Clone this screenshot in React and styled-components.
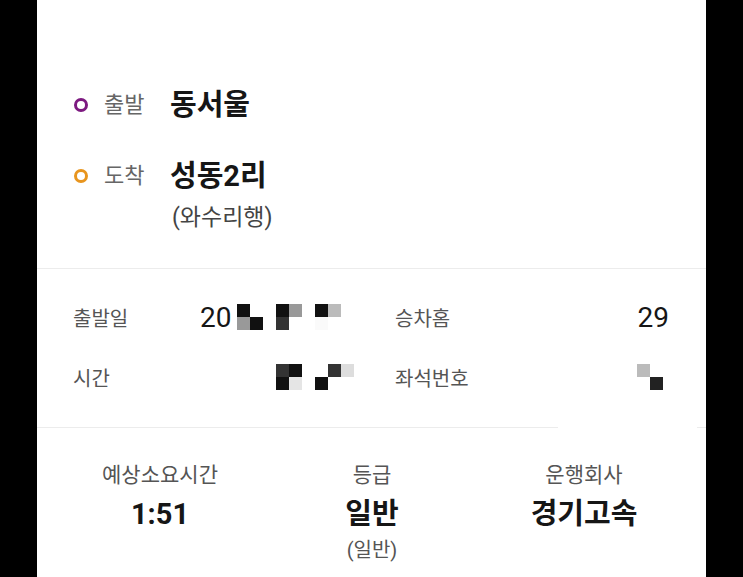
import styled, { createGlobalStyle } from "styled-components";

const GlobalStyle = createGlobalStyle`
  html, body {
    margin: 0;
    padding: 0;
    background: #000;
  }
  body {
    font-family: "Roboto", "Noto Sans CJK KR", "Noto Sans", sans-serif;
  }
`

const Screen = styled.main`
  width: 669px;
  height: 577px;
  margin: 0 auto;
  background: #fff;
  overflow: hidden;
`

const RouteSection = styled.section`
  padding: 85px 0 34px 37px;
  display: flex;
  flex-direction: column;
  gap: 31px;
  border-bottom: 1px solid #ececec;
`

const RouteRow = styled.div`
  display: grid;
  grid-template-columns: 14px 50px 1fr;
  column-gap: 16px;
  align-items: center;
`

const Dot = styled.span`
  width: 14px;
  height: 14px;
  box-sizing: border-box;
  border-radius: 50%;
  border: 3.5px solid ${(p) => p.color};
`

const RouteLabel = styled.span`
  font-size: 22px;
  line-height: 40px;
  color: #666;
`

const RouteValue = styled.span`
  font-size: 29px;
  line-height: 40px;
  font-weight: 700;
  color: #161616;
`

const RouteSub = styled.div`
  grid-column: 3;
  margin-top: 6px;
  padding-left: 2px;
  font-size: 23px;
  line-height: 32px;
  color: #444;
`

const DetailSection = styled.section`
  display: grid;
  grid-template-columns: 322px 1fr;
  row-gap: 20px;
  padding: 28px 37px 30px 36px;
`

const DetailCell = styled.div`
  display: flex;
  align-items: center;
  height: 40px;
  justify-content: ${(p) => (p.$spread ? "space-between" : "flex-start")};
`

const DetailLabel = styled.span`
  width: ${(p) => (p.$wide ? "127px" : "auto")};
  font-size: 20px;
  color: #555;
`

const DetailValue = styled.span`
  display: inline-flex;
  align-items: center;
  font-size: 28px;
  color: #161616;
  margin-right: ${(p) => p.$inset || 0}px;
`

const Mosaic = styled.span`
  display: inline-grid;
  grid-template-columns: repeat(${(p) => p.$cols}, 13px);
  grid-auto-rows: 13px;
  margin-left: ${(p) => p.$offset || 0}px;
`

const Cell = styled.span`
  background: ${(p) => p.$c};
`

const Divider = styled.hr`
  margin: 0;
  border: 0;
  height: 1px;
  background: linear-gradient(
    to right,
    #ececec 0,
    #ececec 521px,
    #fff 521px,
    #fff 660px,
    #ececec 660px
  );
`

const SummarySection = styled.section`
  display: grid;
  grid-template-columns: repeat(3, 212px);
  padding: 32px 0 0 17px;
`

const SummaryCol = styled.div`
  display: flex;
  flex-direction: column;
  align-items: center;
`

const SummaryLabel = styled.span`
  font-size: 21px;
  line-height: 30px;
  color: #555;
`

const SummaryValue = styled.span`
  margin-top: 6px;
  font-size: 29px;
  line-height: 36px;
  font-weight: 700;
  color: #161616;
`

const SummarySub = styled.span`
  margin-top: 3px;
  font-size: 20px;
  line-height: 30px;
  color: #555;
`

const W = "#fff";

const dateCells = [
  "#111", W, W, "#111", "#999", W, "#111", "#bbb", W,
  "#999", "#111", W, "#333", W, W, "#fafafa", W, W,
];

const timeCells = [
  "#333", "#111", W, W, "#333", "#ddd",
  "#111", "#e5e5e5", W, "#111", W, W,
];

const seatCells = ["#bbb", W, W, "#222"];

const Pixels = ({ cells, cols, offset }) => (
  <Mosaic $cols={cols} $offset={offset}>
    {cells.map((c, i) => (
      <Cell key={i} $c={c} />
    ))}
  </Mosaic>
);

const summary = [
  { label: "예상소요시간", value: "1:51" },
  { label: "등급", value: "일반", sub: "(일반)" },
  { label: "운행회사", value: "경기고속" },
];

const App = () => {
  return (
    <>
      <GlobalStyle />
      <Screen>
        <RouteSection>
          <RouteRow>
            <Dot color="#7d1a80" />
            <RouteLabel>출발</RouteLabel>
            <RouteValue>동서울</RouteValue>
          </RouteRow>
          <RouteRow>
            <Dot color="#e8951e" />
            <RouteLabel>도착</RouteLabel>
            <RouteValue>성동2리</RouteValue>
            <RouteSub>(와수리행)</RouteSub>
          </RouteRow>
        </RouteSection>

        <DetailSection>
          <DetailCell>
            <DetailLabel $wide>출발일</DetailLabel>
            <DetailValue>
              20
              <Pixels cells={dateCells} cols={9} offset={6} />
            </DetailValue>
          </DetailCell>
          <DetailCell $spread>
            <DetailLabel>승차홈</DetailLabel>
            <DetailValue>29</DetailValue>
          </DetailCell>
          <DetailCell>
            <DetailLabel $wide>시간</DetailLabel>
            <DetailValue>
              <Pixels cells={timeCells} cols={6} offset={76} />
            </DetailValue>
          </DetailCell>
          <DetailCell $spread>
            <DetailLabel>좌석번호</DetailLabel>
            <DetailValue $inset={6}>
              <Pixels cells={seatCells} cols={2} />
            </DetailValue>
          </DetailCell>
        </DetailSection>

        <Divider />

        <SummarySection>
          {summary.map((s) => (
            <SummaryCol key={s.label}>
              <SummaryLabel>{s.label}</SummaryLabel>
              <SummaryValue>{s.value}</SummaryValue>
              {s.sub && <SummarySub>{s.sub}</SummarySub>}
            </SummaryCol>
          ))}
        </SummarySection>
      </Screen>
    </>
  );
};

export default App;
